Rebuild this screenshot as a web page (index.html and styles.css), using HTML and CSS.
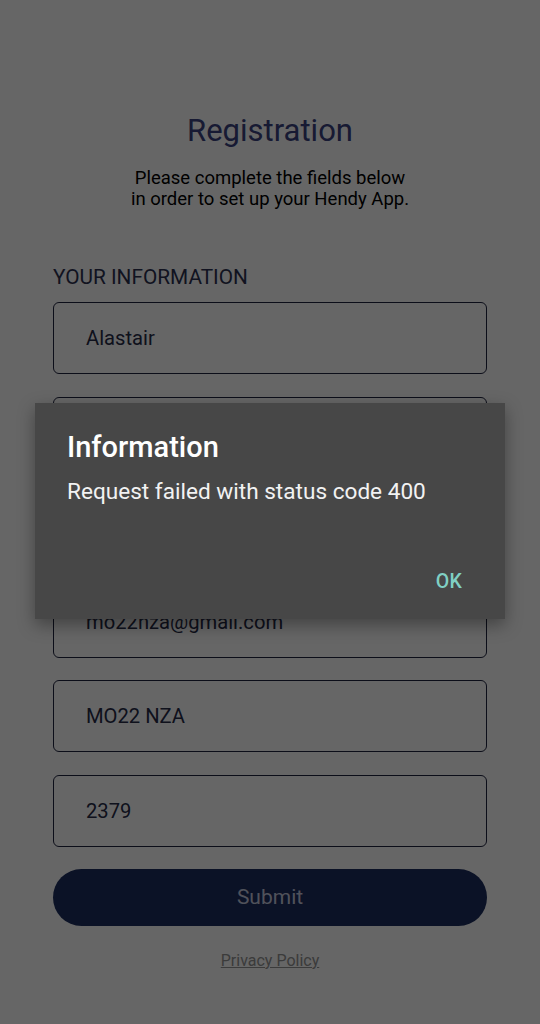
FILE: index.html
```html
<!DOCTYPE html>
<html>
<head>
<meta charset="utf-8">
<link rel="stylesheet" href="styles.css">
</head>
<body>
<div class="page">
  <h1 class="title">Registration</h1>
  <p class="subtitle">Please complete the fields below<br>in order to set up your Hendy App.</p>
  <div class="section-label">YOUR INFORMATION</div>
  <div class="fields">
    <div class="field">Alastair</div>
    <div class="field"></div>
    <div class="field"></div>
    <div class="field">mo22nza@gmail.com</div>
    <div class="field">MO22 NZA</div>
    <div class="field">2379</div>
  </div>
  <button class="submit">Submit</button>
  <a class="privacy" href="#">Privacy Policy</a>
</div>
<div class="scrim"></div>
<div class="dialog">
  <div class="dialog-title">Information</div>
  <div class="dialog-message">Request failed with status code 400</div>
  <div class="dialog-actions"><span class="dialog-ok">OK</span></div>
</div>
</body>
</html>
```
FILE: styles.css
```css
html, body {
  margin: 0;
  padding: 0;
}
body {
  width: 540px;
  height: 1024px;
  background: #ffffff;
  font-family: Roboto, "Noto Sans", sans-serif;
  position: relative;
  overflow: hidden;
}
.page {
  padding: 111px 53px 0;
  display: flex;
  flex-direction: column;
  align-items: stretch;
}
.title {
  margin: 0;
  font-size: 31px;
  line-height: 40px;
  font-weight: 400;
  color: #3a4380;
  text-align: center;
}
.subtitle {
  margin: 17px 0 0;
  font-size: 18.5px;
  line-height: 21px;
  color: #000000;
  text-align: center;
}
.section-label {
  margin-top: 55px;
  font-size: 20.8px;
  line-height: 24px;
  color: #2c3150;
}
.fields {
  margin-top: 13px;
  display: flex;
  flex-direction: column;
  gap: 22.6px;
}
.field {
  box-sizing: border-box;
  height: 72px;
  border: 1.5px solid #20243f;
  border-radius: 6px;
  padding-left: 32px;
  display: flex;
  align-items: center;
  font-size: 20.2px;
  color: #262b48;
}
.submit {
  margin-top: 22px;
  height: 57px;
  border: none;
  border-radius: 29px;
  background: #1c2d5f;
  color: #c8cce0;
  font-family: Roboto, "Noto Sans", sans-serif;
  font-size: 21px;
}
.privacy {
  margin-top: 25px;
  align-self: center;
  font-size: 16px;
  line-height: 20px;
  color: #939393;
  text-decoration: underline;
}
.scrim {
  position: absolute;
  inset: 0;
  background: rgba(0, 0, 0, 0.6);
}
.dialog {
  position: absolute;
  left: 35px;
  top: 403px;
  width: 470px;
  height: 216px;
  box-sizing: border-box;
  background: #474747;
  box-shadow: 0 6px 16px rgba(0, 0, 0, 0.35);
  padding: 27px 32px 0;
  display: flex;
  flex-direction: column;
}
.dialog-title {
  font-size: 29px;
  line-height: 34px;
  font-weight: 500;
  color: #ffffff;
}
.dialog-message {
  margin-top: 14px;
  font-size: 22.6px;
  line-height: 28px;
  color: #f2f2f2;
}
.dialog-actions {
  margin-top: auto;
  height: 50px;
  display: flex;
  justify-content: flex-end;
  align-items: flex-start;
  padding-right: 11px;
}
.dialog-ok {
  font-size: 19.5px;
  line-height: 26px;
  font-weight: 500;
  color: #80d0c4;
  letter-spacing: 0.3px;
}
```
